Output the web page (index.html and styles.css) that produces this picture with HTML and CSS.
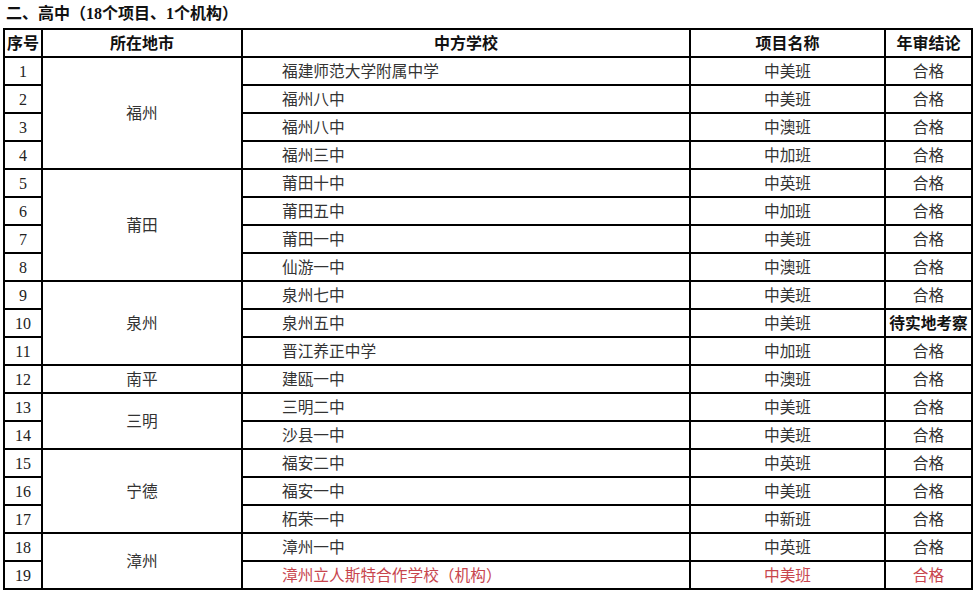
FILE: index.html
```html
<!DOCTYPE html>
<html lang="zh-CN">
<head>
<meta charset="utf-8">
<title>高中项目年审结论</title>
<link rel="stylesheet" href="styles.css">
</head>
<body>
<div class="title">二、高中（18个项目、1个机构）</div>
<table class="grid">
  <colgroup>
    <col class="c-no"><col class="c-city"><col class="c-school"><col class="c-proj"><col class="c-res">
  </colgroup>
  <thead>
    <tr><th>序号</th><th>所在地市</th><th>中方学校</th><th>项目名称</th><th>年审结论</th></tr>
  </thead>
  <tbody>
    <tr><td class="no">1</td><td class="city" rowspan="4">福州</td><td class="school">福建师范大学附属中学</td><td>中美班</td><td>合格</td></tr>
    <tr><td class="no">2</td><td class="school">福州八中</td><td>中美班</td><td>合格</td></tr>
    <tr><td class="no">3</td><td class="school">福州八中</td><td>中澳班</td><td>合格</td></tr>
    <tr><td class="no">4</td><td class="school">福州三中</td><td>中加班</td><td>合格</td></tr>
    <tr><td class="no">5</td><td class="city" rowspan="4">莆田</td><td class="school">莆田十中</td><td>中英班</td><td>合格</td></tr>
    <tr><td class="no">6</td><td class="school">莆田五中</td><td>中加班</td><td>合格</td></tr>
    <tr><td class="no">7</td><td class="school">莆田一中</td><td>中美班</td><td>合格</td></tr>
    <tr><td class="no">8</td><td class="school">仙游一中</td><td>中澳班</td><td>合格</td></tr>
    <tr><td class="no">9</td><td class="city" rowspan="3">泉州</td><td class="school">泉州七中</td><td>中美班</td><td>合格</td></tr>
    <tr><td class="no">10</td><td class="school">泉州五中</td><td>中美班</td><td class="strong">待实地考察</td></tr>
    <tr><td class="no">11</td><td class="school">晋江养正中学</td><td>中加班</td><td>合格</td></tr>
    <tr><td class="no">12</td><td class="city">南平</td><td class="school">建瓯一中</td><td>中澳班</td><td>合格</td></tr>
    <tr><td class="no">13</td><td class="city" rowspan="2">三明</td><td class="school">三明二中</td><td>中美班</td><td>合格</td></tr>
    <tr><td class="no">14</td><td class="school">沙县一中</td><td>中美班</td><td>合格</td></tr>
    <tr><td class="no">15</td><td class="city" rowspan="3">宁德</td><td class="school">福安二中</td><td>中英班</td><td>合格</td></tr>
    <tr><td class="no">16</td><td class="school">福安一中</td><td>中美班</td><td>合格</td></tr>
    <tr><td class="no">17</td><td class="school">柘荣一中</td><td>中新班</td><td>合格</td></tr>
    <tr><td class="no">18</td><td class="city" rowspan="2">漳州</td><td class="school">漳州一中</td><td>中英班</td><td>合格</td></tr>
    <tr><td class="no">19</td><td class="school red">漳州立人斯特合作学校（机构）</td><td class="red">中美班</td><td class="red">合格</td></tr>
  </tbody>
</table>
</body>
</html>
```

FILE: styles.css
```css
html, body {
  margin: 0;
  padding: 0;
  background: #ffffff;
}

body {
  font-family: "Liberation Serif", "Noto Sans CJK SC", serif;
  color: #333333;
}

.title {
  height: 28px;
  padding-left: 6px;
  font-size: 16px;
  font-weight: bold;
  line-height: 28px;
  color: #111111;
}

.grid {
  margin-left: 3px;
  border-collapse: collapse;
  table-layout: fixed;
  width: 968px;
}

.c-no { width: 38px; }
.c-city { width: 200px; }
.c-school { width: 448px; }
.c-proj { width: 195px; }
.c-res { width: 87px; }

.grid th,
.grid td {
  border: 2px solid #000000;
  height: 25px;
  padding: 1px 0 0 0;
  text-align: center;
  vertical-align: middle;
  font-size: 15.7px;
  line-height: 1;
  white-space: nowrap;
  overflow: hidden;
}

.grid th {
  font-weight: bold;
  color: #111111;
  font-size: 16px;
}

.grid td.no {
  font-size: 16px;
  color: #222222;
}

.grid td.school {
  text-align: left;
  padding-left: 39px;
}

.grid td.strong {
  font-weight: bold;
  color: #111111;
}

.grid td.red {
  color: #c8464e;
}
```
